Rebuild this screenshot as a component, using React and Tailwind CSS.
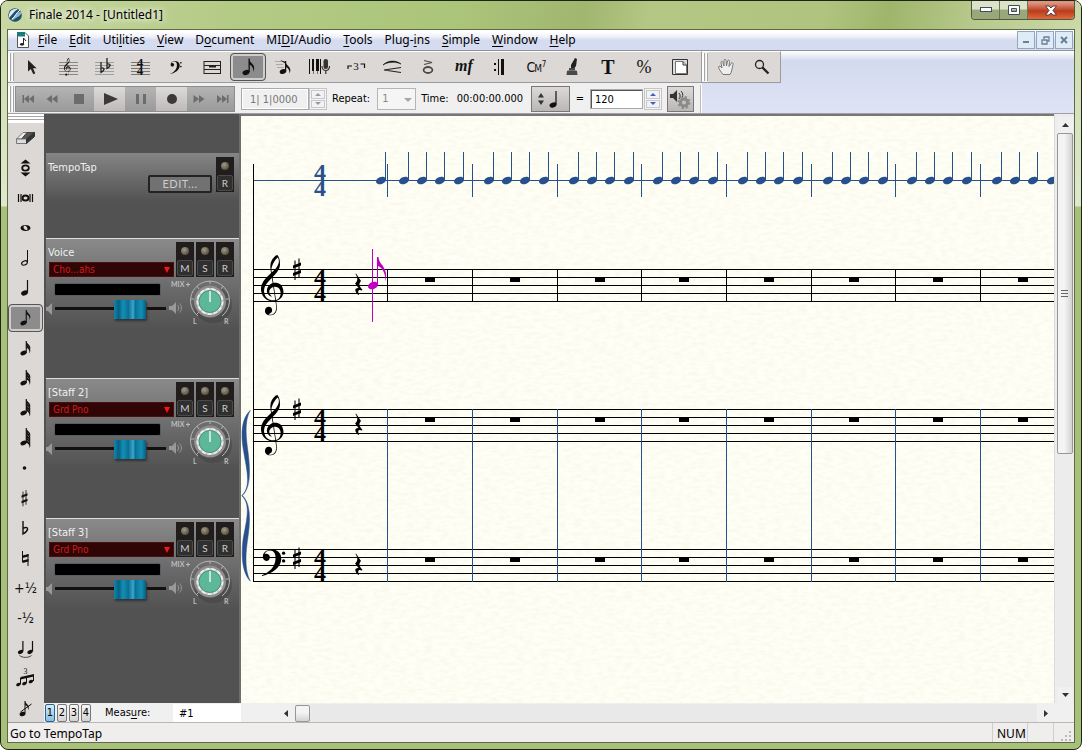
import React, { useState } from "react";

const TREBLE =
  "M12.049 3.53c.305 3.126-2.019 5.656-4.077 7.701-.935.897-.155.148-.644.594-.102-.479-.299-1.731-.28-2.11.13-2.694 2.32-6.588 4.238-8.024.309.577.563.623.763 1.838zm.651 16.142c-1.232-.906-2.85-1.144-4.334-.885-.191-1.255-.382-2.51-.574-3.764 2.351-2.329 4.907-5.032 5.041-8.539.059-2.232-.276-4.671-1.678-6.484-1.7.128-2.9 2.156-3.802 3.417-1.489 2.67-1.141 5.917-.57 8.796-.809.952-1.93 1.743-2.727 2.734-2.356 2.308-4.409 5.43-4.005 8.878.183 3.334 2.589 6.434 5.87 7.227 1.246.315 2.564.346 3.824.099.22 2.25 1.027 4.629.093 6.813-.701 1.598-2.788 3.004-4.333 2.192-.599-.316-.114-.051-.478-.252 1.07-.257 2-1.036 2.26-1.565.838-1.464-.4-3.639-2.155-3.358-2.262.046-3.19 3.14-1.736 4.685 1.347 1.52 3.833 1.312 5.43.318 1.813-1.18 2.04-3.544 1.833-5.562-.07-.678-.403-2.67-.444-3.387.697-.249.209-.059 1.193-.449 2.66-1.053 4.357-4.259 3.594-7.122-.318-1.469-1.044-2.914-2.302-3.792zm.561 5.757c.214 1.991-1.053 4.321-3.079 4.96-.136-.795-.172-1.011-.263-1.475-.482-2.46-.744-4.987-1.116-7.481 1.625-.168 3.458.543 4.023 2.184.244.577.343 1.197.435 1.812zm-5.149 5.196c-2.544.141-4.999-1.595-5.634-4.081-.749-2.153-.528-4.63.821-6.504 1.115-1.702 2.606-3.105 4.028-4.543.183 1.127.366 2.254.549 3.382-2.99.782-5.004 4.725-3.215 7.451.532.764 1.977 2.223 2.766 1.634-1.102-.683-2.003-1.859-1.81-3.227-.082-1.282 1.37-2.911 2.652-3.198.438 2.869.941 6.073 1.379 8.943-.505.1-1.021.143-1.536.143z";

const BASS =
  "M4 20C5 6 19 0 33 0C51 1 60 14 59 30C57 55 31 72 2 79L1 77C24 68 41 52 42 27C43 12 36 3 26 3C18 3 11 8 9 14C16 10 25 15 25 23C25 30 20 34 15 34C8 34 3 28 4 20Z";

const GRAY = "#4a4a4a";

/* ---------- music glyphs ---------- */

const Head = ({ x, y, r = 3.4 }) => (
  <ellipse cx={x} cy={y} rx={r} ry={r * 0.68} transform={`rotate(-22 ${x} ${y})`} />
);

const Flags = ({ x, y, count = 1, size = 1 }) =>
  Array.from({ length: count }, (_, i) => (
    <path
      key={i}
      transform={`translate(${x} ${y + i * 2.6}) scale(${size})`}
      d="M0 0C.6 3 3 3.600 4.200 6C5.200 8 4.600 10 3.800 11.500C4.200 8.500 3 6 0 5Z"
      fillRule="evenodd"
    />
  ));

const BassClef = ({ transform }) => (
  <g transform={transform}>
    <path d={BASS} />
    <circle cx="66" cy="11" r="5" />
    <circle cx="66" cy="34" r="5" />
  </g>
);

const Sharp = ({ x, y, s = 1 }) => (
  <g transform={`translate(${x} ${y}) scale(${s})`}>
    <path d="M-4-3.500L4-6.500V-3.500L-4-.500ZM-4 4L4 1V4L-4 7Z" />
    <path d="M-2-8.500V11M2-10.500V9" stroke="currentColor" strokeWidth="1.100" />
  </g>
);

const QuarterRest = ({ x, y }) => (
  <path
    transform={`translate(${x} ${y})`}
    d="M1.500 0L6.500 7.500C4 10.500 4.500 12.500 8 16.500L7.300 17C4.500 15.600 2.500 17 4.600 21L4 21.500C-.500 18 0 14 4 14.500L.600 10C3.500 7 3.500 5 1 .500Z"
  />
);

const TimeSig = ({ x, y, size = 24, gap = 16 }) => (
  <g fontFamily="Liberation Serif, serif" fontWeight="bold" fontSize={size} textAnchor="middle">
    <text x={x} y={y}>4</text>
    <text x={x} y={y + gap}>4</text>
  </g>
);

const StaffLines = ({ color = "#888" }) => (
  <path d="M-9-4.500H10M-9-1.500H10M-9 1.500H10M-9 4.500H10M-9 7.500H10" stroke={color} strokeWidth="1" />
);

/* ---------- icons for the tool bars, drawn round a 0,0 centre ---------- */

const Icon = ({ children, w = 36, h = 30, color = "#111" }) => (
  <svg
    width={w}
    height={h}
    viewBox={`${-w / 2} ${-h / 2} ${w} ${h}`}
    fill="currentColor"
    className="shrink-0"
    style={{ color }}
    aria-hidden="true"
  >
    {children}
  </svg>
);

const serif = { fontFamily: "Liberation Serif, serif", textAnchor: "middle" };
const sans = { fontFamily: "DejaVu Sans Condensed, sans-serif", textAnchor: "middle" };

const mainTools = [
  {
    name: "Selection",
    icon: <path d="M-4-7V4.500L-1.200 2L1.300 7.200L3.300 6.200L1 1.200H4.600Z" fill="#222" />,
  },
  {
    name: "Staff",
    icon: (
      <>
        <StaffLines />
        <path d={TREBLE} transform="translate(-4 -9) scale(.44)" />
      </>
    ),
  },
  {
    name: "Key Signature",
    icon: (
      <>
        <StaffLines color="#a0a0a0" />
        <g fill="none" stroke="#222" strokeWidth="1.300">
          <path d="M-3-5V5.500C0 4 2 .500-3 1" />
          <path d="M3-9V1.500C6 0 8-3.500 3-3" />
        </g>
      </>
    ),
  },
  {
    name: "Time Signature",
    icon: (
      <>
        <StaffLines color="#777" />
        <TimeSig x={0} y={0} size={13} gap={8} />
      </>
    ),
  },
  { name: "Clef", icon: <BassClef transform="translate(-6 -6) scale(.165)" /> },
  {
    name: "Measure",
    icon: (
      <g fill="none" stroke="#222" strokeWidth="1">
        <path d="M-8-5.500H8.500M-8-1.500H8.500M-8 2.500H8.500M-8 6.500H8.500M-8-6V7M8.500-6V7" />
        <path d="M-3-.500H4" strokeWidth="2" />
      </g>
    ),
  },
  {
    name: "Simple Entry",
    icon: (
      <>
        <Head x={-2} y={5.5} r={3.6} />
        <path d="M.500-8.500H1.800V5H.500Z" />
        <Flags x={1} y={-8} size={1.1} />
      </>
    ),
  },
  {
    name: "Speedy Entry",
    icon: (
      <>
        <path d="M-9-5.500H-1M-8-2.500H-1M-7 .500H0" stroke="#aaa" />
        <Head x={-1} y={4.5} />
        <path d="M1-6H2.200V4H1ZM-4-7L2-5V-3Z" />
        <Flags x={1.6} y={-5} />
      </>
    ),
  },
  {
    name: "HyperScribe",
    icon: (
      <>
        <path d="M-11-8H-10V7H-11ZM-8-8H-6V4H-8ZM-7 4H-6.500V7H-7ZM-4-8H-1V4H-4ZM-3 4H-2.500V7H-3ZM0-8H1V7H0Z" />
        <rect x="3.500" y="-8" width="4.500" height="10" rx="2.200" fill="#333" />
        <path d="M2-1C2 5 9.500 5 9.500-1M5.800 3.500V7" fill="none" stroke="#333" strokeWidth="1.200" />
      </>
    ),
  },
  {
    name: "Tuplet",
    icon: (
      <>
        <text {...serif} x="0" y="3" fontSize="11">3</text>
        <path d="M-8 2V-1H-4M8.500 1V-3H4.500" fill="none" stroke="currentColor" strokeWidth="1.200" />
      </>
    ),
  },
  {
    name: "Smart Shape",
    icon: (
      <>
        <path d="M-9-2C-4-7 4-7 9-3C4-5.500-4-5.500-9-2Z" stroke="currentColor" strokeWidth=".6" />
        <path d="M9 .500L-8 3L9 5.500" fill="none" stroke="#222" strokeWidth="1.200" />
      </>
    ),
  },
  {
    name: "Articulation",
    icon: (
      <g fill="none" stroke={GRAY}>
        <path d="M-4-6.500L4-4.500L-4-2.500" strokeWidth="1.200" />
        <ellipse cx="0" cy="3" rx="4.400" ry="3" strokeWidth="1.800" />
      </g>
    ),
  },
  {
    name: "Expression",
    icon: (
      <text {...serif} x="0" y="4" fontSize="16" fontWeight="bold" fontStyle="italic">mf</text>
    ),
  },
  {
    name: "Repeat",
    icon: <path d="M-6-4H-4V-2H-6ZM-6 2H-4V4H-6ZM-2-8H-1V8H-2ZM1-8H4V8H1Z" />,
  },
  {
    name: "Chord",
    icon: (
      <g {...sans}>
        <text x="-5" y="5" fontSize="14">C</text>
        <text x="2" y="5" fontSize="10">M</text>
        <text x="8" y="0" fontSize="8">7</text>
      </g>
    ),
  },
  {
    name: "Lyrics",
    icon: (
      <>
        <path d="M3-9L5-8L4-1L1 3L-1 2L-1-2Z" fill="#222" />
        <path d="M-3 1H3V3H-3ZM-5 4C-5 3 5 3 5 4L5.500 8H-5.500Z" fill={GRAY} />
      </>
    ),
  },
  {
    name: "Text",
    icon: <text {...serif} x="0" y="7" fontSize="20" fontWeight="bold">T</text>,
  },
  {
    name: "Resize",
    icon: <text {...serif} x="0" y="6" fontSize="18">%</text>,
  },
  {
    name: "Page Layout",
    icon: (
      <g fill="#ddd" stroke="#333">
        <path d="M-7.500-7.500H7.500V7.500H-7.500Z" />
        <path d="M-4.500-5.500H3L6.500-2V6.500H-4.500Z" fill="#fff" stroke="#777" />
        <path d="M3-5.500V-2H6.500" fill="none" />
      </g>
    ),
  },
];

const navTools = [
  {
    name: "Hand Grabber",
    icon: (
      <path
        d="M-3 7.500C-5 5-7 2-7.500 0C-7-1.500-5.500-1-4 1L-5-4.500C-5-6-3.500-6-3-4.500L-2-1L-2-6.500C-2-8-.200-8 0-6.500L.500-1L1.500-6C2-7.500 3.800-7 3.500-5.500L3-.500L5-3.500C6-5 7.500-4 7-2.500C6 1 6 5 4 7.500Z"
        fill="#eee"
        stroke="#777"
      />
    ),
  },
  {
    name: "Zoom",
    icon: (
      <g fill="none" stroke="#222">
        <circle cx="-2.500" cy="-2.500" r="4" strokeWidth="1.300" />
        <path d="M.500.500L6.500 6.500" strokeWidth="2.300" />
      </g>
    ),
  },
];

const flagged = (count, top) => (
  <>
    <Head x={-2} y={5} r={3.2} />
    <path d={`M.2 ${top}H1.300V5H.200Z`} />
    <Flags x={0.8} y={top} count={count} size={0.85} />
  </>
);

const half = (sign) => (
  <g {...sans} fontSize="14">
    <text x="0" y="5">{sign}½</text>
  </g>
);

const entryTools = [
  {
    name: "Eraser",
    icon: (
      <>
        <path d="M-2.500-5.500H9L1 1H-9Z" fill="#eee" stroke="#777" />
        <path d="M1.500-5.500H9L1 1H-4Z" fill="#555" stroke="#444" />
        <path d="M-9 1H1V5.500H-9Z" fill="#dcdcdc" stroke="#777" />
        <path d="M1 1L9-5.500V-1.500L1 5.500Z" fill="#333" stroke="#333" />
      </>
    ),
  },
  {
    name: "Repitch",
    icon: (
      <>
        <path d="M0-8.500L5-4.500H-5ZM0 8.500L5 4.500H-5Z" />
        <ellipse cx="0" cy="0" rx="3.300" ry="2.600" fill="none" stroke="currentColor" strokeWidth="1.800" />
      </>
    ),
  },
  {
    name: "Double Whole Note",
    icon: (
      <>
        <path d="M-7-4V4M-4.500-4V4M4.500-4V4M7-4V4" stroke="currentColor" strokeWidth="1.200" />
        <ellipse cx="0" cy="0" rx="3" ry="2.500" fill="none" stroke="currentColor" strokeWidth="2" />
      </>
    ),
  },
  {
    name: "Whole Note",
    icon: (
      <path
        fillRule="evenodd"
        d="M-5 0C-5-4 5-4 5 0C5 4-5 4-5 0ZM-2-1C-2 1 0 2.500 1.500 2C3 1 1-2 0-2.300C-1-2.500-2-2-2-1Z"
      />
    ),
  },
  {
    name: "Half Note",
    icon: (
      <>
        <ellipse cx="-1" cy="5" rx="3" ry="1.900" transform="rotate(-25 -1 5)" fill="none" stroke="currentColor" strokeWidth="1.200" />
        <path d="M2-8V4.500" stroke="currentColor" />
      </>
    ),
  },
  {
    name: "Quarter Note",
    icon: (
      <>
        <Head x={-1} y={5} r={3.5} />
        <path d="M2-8V4.500" stroke="currentColor" strokeWidth="1.200" />
      </>
    ),
  },
  { name: "Eighth Note", icon: flagged(1, -8) },
  { name: "16th Note", icon: flagged(2, -7) },
  { name: "32nd Note", icon: flagged(3, -8) },
  { name: "64th Note", icon: flagged(4, -9) },
  { name: "128th Note", icon: flagged(5, -10) },
  { name: "Augmentation Dot", icon: <circle cx="-1" cy="0" r="1.800" /> },
  { name: "Sharp", icon: <Sharp x={-1} y={0} s={0.75} /> },
  {
    name: "Flat",
    icon: <path d="M-2.500-7V6C3 3 4-2-2 0" fill="none" stroke="currentColor" strokeWidth="1.400" />,
  },
  {
    name: "Natural",
    icon: (
      <>
        <path d="M-3-7V4M2.500-4V8" stroke="currentColor" />
        <path d="M-3-2.500L3-4V-1.500L-3 0ZM-3 2.500L3 1V3.500L-3 5Z" />
      </>
    ),
  },
  { name: "Half Step Up", icon: half("+") },
  { name: "Half Step Down", icon: half("-") },
  {
    name: "Tie",
    icon: (
      <>
        <Head x={-5} y={4} r={2.8} />
        <Head x={4.5} y={4} r={2.8} />
        <path d="M-2.600-7V3.500M7-7V3.500" stroke="currentColor" strokeWidth="1.200" />
        <path d="M-6 7.500C-3 10 3 10 6 7.500" fill="none" stroke="#444" />
      </>
    ),
  },
  {
    name: "Tuplet Entry",
    icon: (
      <>
        <text {...serif} x="0" y="-4" fontSize="8">3</text>
        <Head x={-7} y={6.5} r={2.4} />
        <Head x={-1} y={5.5} r={2.4} />
        <Head x={5.500} y={3.5} r={2.4} />
        <path d="M-5-1L8.500-4V-1.500L-5 1.500Z" />
        <path d="M-5 0V6M1-2V5M8-3V3" stroke="currentColor" />
      </>
    ),
  },
  {
    name: "Grace Note",
    icon: (
      <>
        <Head x={-3} y={6} r={3} />
        <path d="M-.500-7V5.500M-5 4L6-4" stroke="currentColor" />
        <Flags x={-0.5} y={-7} size={0.8} />
      </>
    ),
  },
];

/* ---------- window chrome ---------- */

const AppLogo = () => (
  <svg width="16" height="16" viewBox="0 0 16 16" aria-hidden="true">
    <circle cx="8" cy="8" r="6.800" fill="#20506e" />
    <path d="M2 11C1 5 5 1 11 2C7 4 5 8 2 11Z" fill="#dfeaf0" />
    <path d="M4 13C7 11 9 5 14 4.500C15 8 12 9 9 11C7 12.500 6 14 4 13Z" fill="#8fb6cc" />
    <path d="M5 12C8 10 9 6 13 3" stroke="#fff" fill="none" />
  </svg>
);

const TitleBar = () => (
  <header className="-mx-1.5 flex h-7 items-start bg-[linear-gradient(100deg,#c9d8a4_0%,#b3ca84_22%,#abc57a_42%,#a1b66f_54%,#b4c784_60%,#b0c47f_76%,#9fb56b_82%,#b7c98c_90%,#cbd9a9_100%)] px-1.5">
    <div className="flex h-7 flex-1 items-center gap-1.5">
      <AppLogo />
      <h1 className="font-['Noto_Sans',sans-serif] text-[12px] leading-4 [text-shadow:0_0_6px_#fff,0_0_8px_#fff]">
        Finale 2014 - [Untitled1]
      </h1>
    </div>
    <div className="flex h-[19px] rounded-b border border-t-0 border-[#50583e]">
      <button aria-label="Minimize" className="flex w-7 items-center justify-center rounded-bl border-r border-[#6b7752] bg-linear-to-b from-[#dbe3c9] from-45% to-[#98a87a] to-50%">
        <svg width="14" height="6"><rect x="1.500" y=".5" width="11" height="4" fill="#fff" stroke="#454b5c" /></svg>
      </button>
      <button aria-label="Maximize" className="flex w-7 items-center justify-center border-r border-[#6b7752] bg-linear-to-b from-[#dbe3c9] from-45% to-[#98a87a] to-50%">
        <svg width="12" height="10">
          <path d="M.500.500H11.500V9.500H.500ZM3.500 3.500V6.500H8.500V3.500Z" fill="#fff" stroke="#454b5c" fillRule="evenodd" />
        </svg>
      </button>
      <button aria-label="Close" className="flex w-[46px] items-center justify-center rounded-br bg-linear-to-b from-[#dd9480] from-10% via-[#bb3a1c] via-55% to-[#dd6b3d]">
        <svg width="14" height="11" viewBox="0 0 14 11">
          <path d="M1.500 1H5L7 3L9 1H12.500L9 5.500L12.500 10H9L7 8L5 10H1.500L5 5.500Z" fill="#fff" stroke="#5a3a40" />
        </svg>
      </button>
    </div>
  </header>
);

const menus = [
  ["", "F", "ile"],
  ["", "E", "dit"],
  ["Uti", "l", "ities"],
  ["", "V", "iew"],
  ["D", "o", "cument"],
  ["MI", "D", "I/Audio"],
  ["", "T", "ools"],
  ["Plug-", "i", "ns"],
  ["", "S", "imple"],
  ["", "W", "indow"],
  ["", "H", "elp"],
];

const childButton = "flex h-[18px] w-[18px] items-center justify-center border border-[#93a5bf] bg-[#dfebf7]";

const MenuBar = () => (
  <nav className="flex h-[21px] shrink-0 items-center border-b border-[#8f929b] bg-linear-to-b from-white from-10% via-[#eef0f8] via-35% to-[#d6dcf0] to-50% pl-2">
    <svg width="14" height="16" viewBox="0 0 14 16" aria-hidden="true">
      <path d="M1.500.500H9L12.500 4V15.500H1.500Z" fill="#fff" stroke="#555" />
      <path d="M1 0H9V4.500H1Z" fill="#1d7b80" />
      <path d="M7.500 6V12M7.500 6L10 9" stroke="#222" fill="none" />
      <ellipse cx="6" cy="12.300" rx="2" ry="1.400" fill="#222" />
    </svg>
    <ul className="flex flex-1 gap-3 pl-2">
      {menus.map(([before, key, after]) => (
        <li key={before + key + after} className="flex">
          <button className="font-['Noto_Sans',sans-serif] text-[12px] leading-4">
            {before}
            <span className="underline underline-offset-2">{key}</span>
            {after}
          </button>
        </li>
      ))}
    </ul>
    <div className="flex gap-px pr-px">
      <button aria-label="Minimize document" className={childButton}>
        <svg width="8" height="8"><path d="M1 6H7" stroke="#6a7f96" strokeWidth="2" /></svg>
      </button>
      <button aria-label="Restore document" className={childButton}>
        <svg width="9" height="9">
          <path d="M3 3V1H8V5H6M1 4H6V8H1Z" fill="none" stroke="#6a7f96" strokeWidth="1.300" />
        </svg>
      </button>
      <button aria-label="Close document" className={childButton}>
        <svg width="8" height="8"><path d="M1 1L7 7M7 1L1 7" stroke="#6a7f96" strokeWidth="2" /></svg>
      </button>
    </div>
  </nav>
);

const Grip = () => (
  <div className="flex w-1.5 shrink-0 gap-px self-stretch bg-[#efefef] py-px">
    <div className="w-[3px] border-r border-[#a5a5a5] bg-white" />
    <div className="w-[3px] border-r border-[#a5a5a5] bg-white" />
  </div>
);

const pressed =
  "flex shrink-0 items-center justify-center overflow-hidden rounded-sm border border-[#555] bg-[#8c8c8c] inset-ring-2 inset-ring-[#cfcccb]";

const ToolButton = ({ tool, active, onClick }) => (
  <button
    aria-label={tool.name}
    aria-pressed={active}
    onClick={onClick}
    className={
      active
        ? `${pressed} h-7 w-9`
        : "flex h-7 w-9 shrink-0 items-center justify-center overflow-hidden"
    }
  >
    <Icon>{tool.icon}</Icon>
  </button>
);

const MainToolbar = () => {
  const [tool, setTool] = useState("Simple Entry");
  return (
    <div className="flex h-8 overflow-hidden">
      <div className="flex items-center border-t border-b border-t-white border-b-[#9b9b9b] bg-[#dbd8d6] pr-[3px]">
        <Grip />
        {mainTools.map((t) => (
          <ToolButton key={t.name} tool={t} active={tool === t.name} onClick={() => setTool(t.name)} />
        ))}
      </div>
      <div className="flex items-center border border-t-white border-r-[#9b9b9b] border-b-[#9b9b9b] border-l-[#9b9b9b] bg-[#dbd8d6]">
        <Grip />
        {navTools.map((t) => (
          <ToolButton key={t.name} tool={t} active={tool === t.name} onClick={() => setTool(t.name)} />
        ))}
      </div>
    </div>
  );
};

const transport = [
  { name: "Rewind to start", d: "M-5-4V4H-6.500V-4ZM0-4V4L-5 0ZM5-4V4L0 0Z", size: "w-[25px]", lit: false },
  { name: "Rewind", d: "M0-4V4L-5.500 0ZM5.500-4V4L0 0Z", size: "w-[22px]", lit: false },
  { name: "Stop", d: "M-5-5H5V5H-5Z", size: "w-[31px]", lit: false },
  { name: "Play", d: "M-6-6L8 0L-6 6Z", size: "w-[31px]", lit: true },
  { name: "Pause", d: "M-5-5H-2V5H-5ZM2-5H5V5H2Z", size: "w-[31px]", lit: false },
  { name: "Record", d: "M-5 0A5 5 0 1 1 5 0A5 5 0 1 1-5 0Z", size: "w-[31px]", lit: true },
  { name: "Fast forward", d: "M0-4V4L5.500 0ZM-5.500-4V4L0 0Z", size: "w-[23px]", lit: false },
  { name: "Forward to end", d: "M5-4V4H6.500V-4ZM0-4V4L5 0ZM-5-4V4L0 0Z", size: "w-[24px]", lit: false },
];

const Spinner = ({ label, color }) => (
  <div className="flex h-[22px] w-[18px] flex-col gap-px border border-[#c4c4c4] bg-[#f4f4f4] p-px">
    {["M0 3L3 0L6 3Z", "M0 0L3 3L6 0Z"].map((d, i) => (
      <button
        key={d}
        aria-label={label + (i ? " down" : " up")}
        className="flex flex-1 items-center justify-center border border-[#c8c8cc] bg-[#f2f2f4]"
      >
        <svg width="6" height="3"><path d={d} fill={color} /></svg>
      </button>
    ))}
  </div>
);

const PlaybackBar = () => (
  <div className="flex h-[30px] overflow-hidden">
    <div className="flex items-center bg-[#f0f0f0] pt-[2px] text-[11px]">
      <Grip />
      <div className="ml-px flex h-[26px] border border-[#8d8d8d]">
        {transport.map((b) => (
          <button
            key={b.name}
            aria-label={b.name}
            className={
              b.lit
                ? `${b.size} flex items-center justify-center overflow-hidden bg-linear-to-b from-[#dedad8] to-[#bdbab9]`
                : `${b.size} flex items-center justify-center overflow-hidden bg-linear-to-b from-[#b4b4b4] to-[#9a9a9a]`
            }
          >
            <Icon w={22} h={20} color={b.lit ? "#3a3a3a" : "#6c6c6c"}>
              <path d={b.d} />
            </Icon>
          </button>
        ))}
      </div>
      <input
        aria-label="Counter"
        defaultValue="1| 1|0000"
        className="ml-1.5 h-[22px] w-[68px] border border-[#aaa] bg-[#f0f0f0] pl-2 text-[11px] text-[#777] shadow-[inset_0_0_0_1px_#fff]"
      />
      <Spinner label="Counter" color="#999" />
      <label htmlFor="repeat" className="ml-[5px]">Repeat:</label>
      <div className="relative ml-[7px]">
        <select
          id="repeat"
          className="block h-[22px] w-[39px] appearance-none border border-[#b5b5b5] bg-[#f5f5f5] pl-1 text-[11px] text-[#888]"
        >
          <option>1</option>
          <option>2</option>
        </select>
        <svg width="8" height="4" className="pointer-events-none absolute top-[10px] right-1">
          <path d="M0 0H8L4 4Z" fill="#a5a5a5" />
        </svg>
      </div>
      <span className="ml-[5px]">Time:</span>
      <output className="ml-2 w-[67px]">00:00:00.000</output>
      <button
        aria-label="Beat unit"
        className="ml-[7px] flex h-[26px] w-[39px] items-center justify-center border border-[#777] bg-linear-to-b from-[#dcd9d8] to-[#b9b6b5]"
      >
        <Icon w={34} h={24}>
          <path d="M-9-6L-6-1.500H-12ZM-9 6L-6 1.500H-12Z" fill="#333" />
          <Head x={3} y={6} r={3.6} />
          <path d="M6-8V5.500" stroke="#111" strokeWidth="1.200" />
        </Icon>
      </button>
      <label htmlFor="tempo" className="ml-1.5">=</label>
      <input
        id="tempo"
        defaultValue="120"
        className="ml-1.5 h-[20px] w-[53px] border border-[#aaa] bg-white pl-1 text-[11px] shadow-[inset_1px_1px_0_#555]"
      />
      <div className="ml-px">
        <Spinner label="Tempo" color="#3b5fc4" />
      </div>
      <button
        aria-label="Playback settings"
        className="ml-[5px] flex h-[26px] w-[27px] items-center justify-center border border-[#777] bg-linear-to-b from-[#dcd9d8] to-[#b9b6b5]"
      >
        <svg width="24" height="22" viewBox="0 0 24 22" aria-hidden="true">
          <path d="M2 6H5L9 2V14L5 10H2Z" fill="#333" />
          <path d="M11 5C12.500 7 12.500 9 11 11M13 3C15 5 15 7 14.500 9" stroke="#333" fill="none" />
          <circle cx="16" cy="14.500" r="3.500" fill="none" stroke="#8a8a8a" strokeWidth="3" />
          <circle cx="16" cy="14.500" r="5.500" fill="none" stroke="#8a8a8a" strokeWidth="2" strokeDasharray="2.200 2.120" />
        </svg>
      </button>
      <div className="ml-1.5 w-0.5 self-stretch border-l border-[#bbb] bg-white" />
    </div>
  </div>
);

/* ---------- left palette ---------- */

const EntryPalette = () => {
  const [tool, setTool] = useState("Eighth Note");
  return (
    <aside className="flex w-9 shrink-0 flex-col overflow-hidden border-b border-[#9b9b9b] bg-[#dbd8d6]">
      <div className="flex h-[9px] shrink-0 flex-col gap-[2px] bg-white pt-[2px]">
        <div className="h-px bg-[#a5a5a5]" />
        <div className="h-px bg-[#a5a5a5]" />
      </div>
      {entryTools.map((t) => (
        <button
          key={t.name}
          aria-label={t.name}
          aria-pressed={tool === t.name}
          onClick={() => setTool(t.name)}
          className={
            tool === t.name
              ? `${pressed} my-px h-7 w-[35px]`
              : "flex h-[30px] w-[35px] shrink-0 items-center justify-center overflow-hidden"
          }
        >
          <Icon w={35}>{t.icon}</Icon>
        </button>
      ))}
    </aside>
  );
};

/* ---------- mixer ---------- */

const LedButton = ({ letter }) => (
  <div className="flex h-[35px] w-[18px] flex-col items-center justify-between bg-[#221d1d]">
    <span className="mt-[5px] h-2 w-2 rounded-full bg-[radial-gradient(circle_at_40%_35%,#a19b86,#3a3528)]" />
    <button
      aria-label={letter}
      className="mb-px h-4 w-4 rounded-xs border border-[#4a4a4a] bg-[#2f2f2f] font-['Lato',sans-serif] text-[10px] leading-[14px] text-[#ccc]"
    >
      {letter}
    </button>
  </div>
);

const Knob = () => (
  <svg width="68" height="50" viewBox="0 0 68 50" aria-hidden="true">
    <text x="3" y="10" fontSize="7" fontWeight="bold" fill="#bdbdbd" fontFamily="Lato, sans-serif">MIX</text>
    <path d="M18 7.500H22M20 5.500V9.500" stroke="#bdbdbd" />
    <path d="M1 29H4L8 25V37L4 33H1Z" fill="#999" />
    <path d="M9.500 28C11 30 11 32 9.500 34M11.500 26.500C14 29 14 33 11.500 35.500" stroke="#999" fill="none" />
    <g transform="translate(0 1)">
      <ellipse cx="45" cy="27" rx="19" ry="18" fill="#3f3f3f" opacity=".5" />
      <path d="M30 38A19.500 19.500 0 1 1 54 38" fill="none" stroke="#b5b5b5" />
      <path d="M42 3V6M29 8L31 11M55 8L53 11M23 21H26M61 21H58M29 36L31 34" stroke="#b5b5b5" />
      <circle cx="42" cy="23.500" r="16" fill="#8e8e8e" />
      <circle cx="42" cy="23.500" r="13.500" fill="#c9c9c9" />
      <circle cx="42" cy="23.500" r="12.500" fill="none" stroke="#ececec" strokeWidth="2" strokeDasharray="4 2" />
      <circle cx="42" cy="23.500" r="11" fill="#5cb898" stroke="#4b8f78" />
      <path d="M42 13V24" stroke="#fff" strokeWidth="1.300" />
    </g>
    <g fontSize="7" fontWeight="bold" fill="#bdbdbd" fontFamily="Lato, sans-serif">
      <text x="25" y="47">L</text>
      <text x="56" y="47">R</text>
    </g>
  </svg>
);

const Strip = ({ name, sound }) => (
  <section className="mb-[49px] h-[91px] border-t border-[#dedede] bg-linear-to-b from-[#8a8a8a] to-[#525252] pt-[3px]">
    <div className="flex">
      <div className="flex w-[130px] flex-col justify-between">
        <h2 className="pt-[3px] pl-0.5 text-[11px] leading-4 text-[#f0f0f0]">{name}</h2>
        <button className="mr-[2px] ml-[3px] flex h-[15px] items-center justify-between border border-[#4a1010] bg-[#300505] px-[3px] text-[10px] leading-3 text-[#d41a1a]">
          {sound}
          <svg width="6" height="6"><path d="M0 0H6L3 6Z" fill="#f01818" /></svg>
        </button>
      </div>
      <div className="flex gap-[2px]">
        <LedButton letter="M" />
        <LedButton letter="S" />
        <LedButton letter="R" />
      </div>
    </div>
    <div className="flex">
      <div className="w-[122px] pt-1.5">
        <div className="ml-2 h-[13px] w-[107px] rounded-xs border border-[#555f63] bg-black" />
        <div className="mt-[3px] flex items-center gap-[3px]">
          <svg width="6" height="12" aria-hidden="true"><path d="M0 4H2L6 0V12L2 8H0Z" fill="#999" /></svg>
          <input
            type="range"
            aria-label={name + " volume"}
            defaultValue="75"
            className="h-5 w-[111px] appearance-none bg-[linear-gradient(transparent_8px,#151010_8px,#151010_11px,transparent_11px)] [&::-webkit-slider-thumb]:h-[19px] [&::-webkit-slider-thumb]:w-8 [&::-webkit-slider-thumb]:appearance-none [&::-webkit-slider-thumb]:bg-[linear-gradient(90deg,#0f86ad,#0a5f82_15%,#1290b5_28%,#0b6f95_45%,#3aa8cb_60%,#0b6f95_66%,#1290b5_85%,#0a5f82)] [&::-webkit-slider-thumb]:shadow-[1px_2px_2px_#333]"
          />
        </div>
      </div>
      <Knob />
    </div>
  </section>
);

const Mixer = () => (
  <aside className="w-[197px] shrink-0 overflow-hidden border-r-2 border-[#6e6e6e] bg-[#525252] pl-[2px]">
    <section className="mt-[39px] mb-[36px] flex h-[49px] bg-linear-to-b from-[#858585] to-[#525252] pt-1">
      <div className="w-[170px]">
        <h2 className="pt-[3px] pl-0.5 text-[11px] leading-[15px] text-[#f0f0f0]">TempoTap</h2>
        <button className="mr-1 ml-auto block h-[18px] w-16 rounded-xs border-2 border-[#222] bg-[#717171] text-center font-['Lato',sans-serif] text-[11px] leading-[14px] tracking-wider text-[#ccc]">
          EDIT...
        </button>
      </div>
      <LedButton letter="R" />
    </section>
    <Strip name="Voice" sound="Cho...ahs" />
    <Strip name="[Staff 2]" sound="Grd Pno" />
    <Strip name="[Staff 3]" sound="Grd Pno" />
  </aside>
);

/* ---------- score ---------- */

const BARS = [387, 472, 557, 641, 726, 811, 895, 980, 1065, 1150, 1234, 1319, 1404, 1488];
const BLUE = "#28508c";

const Score = () => (
  <svg className="block h-full w-full" role="img" aria-label="Score page">
    <defs>
      <filter id="paper" x="0" y="0" width="100%" height="100%">
        <feTurbulence type="fractalNoise" baseFrequency=".12 .3" numOctaves="3" seed="4" />
        <feColorMatrix values="0 0 0 0 .75  0 0 0 0 .72  0 0 0 0 .55  .4 0 0 0 -.14" />
      </filter>
    </defs>
    <rect width="100%" height="100%" fill="#fffff6" />
    <rect width="100%" height="100%" filter="url(#paper)" />
    <g transform="translate(-241 -116)">
      <g fill={BLUE} stroke="none">
        <path d="M254 180.500H3000" stroke={BLUE} />
        <TimeSig x={320} y={180} />
        <Head x={381} y={180.5} r={5.2} />
        <path d="M385.500 152V180" stroke={BLUE} />
        {BARS.map((bar) => (
          <g key={bar}>
            <path d={`M${bar + 0.5} 164V197`} stroke={BLUE} />
            {[21, 39, 57, 76].map((dx) => (
              <g key={dx}>
                <Head x={bar + dx - 4} y={180.5} r={5.2} />
                <path d={`M${bar + dx + 0.5} 152V180`} stroke={BLUE} />
              </g>
            ))}
          </g>
        ))}
      </g>

      <path d="M253.500 164V582" stroke="#000" />
      {[269, 409, 549].map((top) => (
        <g key={top} color="#000">
          {[0, 8, 16, 24, 32].map((dy) => (
            <path key={dy} d={`M254 ${top + dy + 0.5}H3000`} stroke="#000" />
          ))}
          {top === 549 ? (
            <>
              <BassClef transform="translate(261.500 549.500) scale(.335)" />
              <Sharp x={297} y={558} />
            </>
          ) : (
            <>
              <path d={TREBLE} transform={`translate(261 ${top - 14}) scale(1.480)`} />
              <Sharp x={297} y={top} />
            </>
          )}
          <TimeSig x={320} y={top + 16} />
          <QuarterRest x={354.500} y={top + 4.5} />
          {BARS.map((bar) => (
            <rect key={bar} x={bar + 38} y={top + 8} width="10" height="5" />
          ))}
        </g>
      ))}
      {BARS.map((bar) => (
        <g key={bar}>
          <path d={`M${bar + 0.5} 269V302`} stroke="#000" />
          <path d={`M${bar + 0.5} 409V582`} stroke={BLUE} />
        </g>
      ))}
      <path
        transform="translate(235 390) scale(.333)"
        fill={BLUE}
        stroke={BLUE}
        strokeWidth="1.500"
        d="M46 61C30 88 32 130 37 170C43 215 53 290 22 317C53 345 43 415 37 455C31 500 30 545 46 574C22 550 18 500 24 450C32 400 50 345 21 318V316C50 290 34 235 26 185C16 130 20 85 46 61Z"
      />

      {/* entry cursor */}
      <g fill="#c000c0">
        <path d="M372.500 249V322M377.500 258V285" stroke="#c000c0" />
        <Head x={373} y={285.5} r={5.2} />
        <path d="M377 257H378.500C379 263 382 263 385 270C387 275 386 279 385.500 282C386 275 383 268 378 266Z" />
      </g>
    </g>
  </svg>
);

const arrowBtn = "flex shrink-0 items-center justify-center bg-[#f0f0f0]";

const VerticalScroll = () => (
  <div className="flex w-5 shrink-0 flex-col border-l border-[#dcdcdc] bg-[#ececec] pt-[3px] pr-px pl-[2px]">
    <button aria-label="Scroll up" className={`${arrowBtn} h-4 w-full`}>
      <svg width="7" height="4"><path d="M0 4L3.500 0L7 4Z" fill="#333" /></svg>
    </button>
    <div className="flex-1">
      <div className="flex h-[58%] items-center justify-center rounded-xs border border-[#979797] bg-linear-to-r from-[#f4f4f4] from-45% to-[#d3d3d6]">
        <svg width="8" height="8"><path d="M0 .500H7M0 3.500H7M0 6.500H7" stroke="#666" /></svg>
      </div>
    </div>
    <button aria-label="Scroll down" className={`${arrowBtn} h-4 w-full`}>
      <svg width="7" height="4"><path d="M0 0L3.500 4L7 0Z" fill="#333" /></svg>
    </button>
  </div>
);

const BottomBar = () => {
  const [layer, setLayer] = useState(1);
  return (
    <div className="flex h-5 shrink-0 items-center border-b border-[#b8b8b8] bg-[#f0f0f0] pt-px text-[11px]">
      <div className="flex gap-[2px] pl-px">
        {[1, 2, 3, 4].map((n) => (
          <button
            key={n}
            onClick={() => setLayer(n)}
            aria-label={`Layer ${n}`}
            className={
              layer === n
                ? "h-[18px] w-2.5 rounded-xs border border-[#2c628b] bg-linear-to-b from-[#d5ecfa] to-[#86c0e2] text-[11px] leading-4"
                : "h-[18px] w-2.5 rounded-xs border border-[#777] bg-linear-to-b from-[#f6f6f6] to-[#d4d4d4] text-[11px] leading-4"
            }
          >
            {n}
          </button>
        ))}
      </div>
      <label htmlFor="measure" className="ml-3.5 w-[68px]">
        Meas<span className="underline underline-offset-2">u</span>re:
      </label>
      <input id="measure" defaultValue="#1" className="h-[18px] w-[68px] bg-white pl-1.5 text-[11px]" />
      <div className="ml-9 flex h-[18px] flex-1 items-center bg-[#e9e9e9]">
        <button aria-label="Scroll left" className={`${arrowBtn} h-full w-[18px]`}>
          <svg width="4" height="7"><path d="M4 0V7L0 3.500Z" fill="#333" /></svg>
        </button>
        <div className="h-[17px] w-[15px] rounded-xs border border-[#979797] bg-linear-to-b from-[#f4f4f4] from-45% to-[#d3d3d6]" />
        <div className="flex-1" />
        <button aria-label="Scroll right" className={`${arrowBtn} h-full w-[17px]`}>
          <svg width="4" height="7"><path d="M0 0V7L4 3.500Z" fill="#333" /></svg>
        </button>
      </div>
      <div className="w-5 shrink-0" />
    </div>
  );
};

const StatusBar = () => (
  <footer className="flex h-[19px] shrink-0 items-stretch bg-[#f0eded] font-['Noto_Sans',sans-serif] text-[12px] leading-[22px]">
    <p className="flex-1 pl-[2px]">Go to TempoTap</p>
    <p className="w-9 border-x border-[#d0cdcd] pl-1">NUM</p>
    <div className="w-[26px] border-r border-[#d0cdcd]" />
    <svg width="20" height="19" aria-hidden="true">
      <path d="M15 8h2v2h-2zM11 12h2v2h-2zM15 12h2v2h-2zM7 16h2v2h-2zM11 16h2v2h-2zM15 16h2v2h-2z" fill="#bcb8b8" />
    </svg>
  </footer>
);

export default function App() {
  return (
    <div className="flex h-screen flex-col overflow-hidden rounded-lg border border-[#1d2614] bg-[linear-gradient(#cbd9a9_0px,#dfe8cc_205px,#a9c07b_206px,#a9c07b_100%)] px-1.5 pb-1.5 font-['DejaVu_Sans_Condensed','DejaVu_Sans',sans-serif] text-black">
      <TitleBar />
      <div className="flex min-h-0 flex-1 flex-col border border-[#5b6b45]">
        <MenuBar />
        <div className="shrink-0 border-b border-[#a0a0a6] bg-linear-to-b from-white via-[#d3d9ee] via-16% to-[#dfe4f5]">
          <MainToolbar />
          <PlaybackBar />
        </div>
        <main className="flex min-h-0 flex-1">
          <EntryPalette />
          <div className="flex min-w-0 flex-1 flex-col">
            <div className="flex min-h-0 flex-1">
              <Mixer />
              <div className="min-w-0 flex-1 overflow-hidden border-t-2 border-[#777]">
                <Score />
              </div>
              <VerticalScroll />
            </div>
            <BottomBar />
          </div>
        </main>
        <StatusBar />
      </div>
    </div>
  );
}
